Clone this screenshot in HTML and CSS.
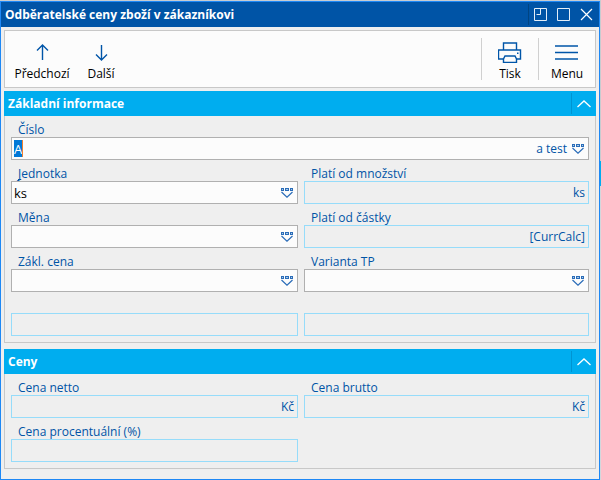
FILE: index.html
```
<!DOCTYPE html>
<html lang="cs">
<head>
    <meta charset="UTF-8">
    <meta name="viewport" content="width=device-width, initial-scale=1.0">
    <title>Odběratelské ceny zboží v zákazníkovi</title>
    <link rel="stylesheet" href="styles.css">
</head>
<body>
    <svg class="sprite" aria-hidden="true">
        <symbol id="pick" viewBox="0 0 12 10">
            <path d="M0 0h3v3H0zM4 0h4v3H4zM9 0h3v3H9z" fill="#2a6cb8"/>
            <path d="M1 1h1v1H1zM5 1h2v1H5zM10 1h1v1H10z" fill="#a9cbea"/>
            <path d="M0.5 4L6 9.2L11.5 4" fill="none" stroke="#2a6cb8" stroke-width="1.2"/>
        </symbol>
        <symbol id="chevron" viewBox="0 0 14 8">
            <path d="M0.5 7L7 1L13.5 7" fill="none" stroke="#fff" stroke-width="1.3"/>
        </symbol>
    </svg>

    <div class="window">
        <header class="titlebar">
            <h1>Odběratelské ceny zboží v zákazníkovi</h1>
            <div class="window-buttons">
                <button type="button" aria-label="Ukotvit">
                    <svg width="13" height="13" viewBox="0 0 13 13"><path d="M0.5 0.5h12v12h-12zM6.5 1v5.5h-4" fill="none" stroke="#e4eef8"/></svg>
                </button>
                <button type="button" aria-label="Maximalizovat">
                    <svg width="13" height="13" viewBox="0 0 13 13"><path d="M0.5 0.5h12v12h-12z" fill="none" stroke="#e4eef8"/></svg>
                </button>
                <button type="button" aria-label="Zavřít">
                    <svg width="13" height="13" viewBox="0 0 13 13"><path d="M1 1l11 11M12 1L1 12" fill="none" stroke="#fff" stroke-width="1.2"/></svg>
                </button>
            </div>
        </header>

        <nav class="toolbar">
            <button type="button" class="tool tool-prev">
                <svg width="24" height="24" viewBox="0 0 24 24"><path d="M12.5 21V6M7 11.5L12.5 6L18 11.5" fill="none" stroke="#0055a8" stroke-width="1.4"/></svg>
                <span>Předchozí</span>
            </button>
            <button type="button" class="tool tool-next">
                <svg width="24" height="24" viewBox="0 0 24 24"><path d="M12.5 6V21M7 15.5L12.5 21L18 15.5" fill="none" stroke="#0055a8" stroke-width="1.4"/></svg>
                <span>Další</span>
            </button>
            <button type="button" class="tool tool-side tool-right">
                <svg width="24" height="24" viewBox="0 0 24 24">
                    <path d="M5.5 11V4h13v7M5.5 20h-5v-9h22v9h-4" fill="none" stroke="#0055a8" stroke-width="1.4"/>
                    <path d="M7 17h10l1.500 3v3.500h-13V20z" fill="none" stroke="#0055a8" stroke-width="1.4"/>
                    <path d="M19 13.500h1.500v1.500H19z" fill="#0055a8"/>
                </svg>
                <span>Tisk</span>
            </button>
            <button type="button" class="tool tool-side">
                <svg width="24" height="24" viewBox="0 0 24 24"><path d="M0 7h23M0 13.5h23M0 20h23" fill="none" stroke="#0055a8" stroke-width="1.4"/></svg>
                <span>Menu</span>
            </button>
        </nav>

        <section class="panel">
            <div class="panel-head">
                <h2>Základní informace</h2>
                <button type="button" class="collapse" aria-label="Sbalit"><svg width="14" height="8"><use href="#chevron"/></svg></button>
            </div>
            <div class="panel-body">
                <div class="field field-wide">
                    <label for="cislo">Číslo</label>
                    <div class="box">
                        <div class="code"><input type="text" id="cislo" class="selected" value="A"></div>
                        <span class="unit">a test</span>
                        <button type="button" class="pick" aria-label="Vybrat číslo"><svg width="12" height="10"><use href="#pick"/></svg></button>
                    </div>
                </div>
                <div class="field">
                    <label for="jednotka"><u>J</u>ednotka</label>
                    <div class="box">
                        <input type="text" id="jednotka" value="ks">
                        <button type="button" class="pick" aria-label="Vybrat jednotku"><svg width="12" height="10"><use href="#pick"/></svg></button>
                    </div>
                </div>
                <div class="field">
                    <label for="mnozstvi">Platí od množství</label>
                    <div class="box readonly">
                        <input type="text" id="mnozstvi" readonly>
                        <span class="unit">ks</span>
                    </div>
                </div>
                <div class="field">
                    <label for="mena">Měna</label>
                    <div class="box">
                        <input type="text" id="mena">
                        <button type="button" class="pick" aria-label="Vybrat měnu"><svg width="12" height="10"><use href="#pick"/></svg></button>
                    </div>
                </div>
                <div class="field">
                    <label for="castka">Platí od částky</label>
                    <div class="box readonly">
                        <input type="text" id="castka" readonly>
                        <span class="unit">[CurrCalc]</span>
                    </div>
                </div>
                <div class="field">
                    <label for="zaklcena">Zákl. cena</label>
                    <div class="box">
                        <input type="text" id="zaklcena">
                        <button type="button" class="pick" aria-label="Vybrat základní cenu"><svg width="12" height="10"><use href="#pick"/></svg></button>
                    </div>
                </div>
                <div class="field">
                    <label for="varianta">Varianta TP</label>
                    <div class="box">
                        <input type="text" id="varianta">
                        <button type="button" class="pick" aria-label="Vybrat variantu"><svg width="12" height="10"><use href="#pick"/></svg></button>
                    </div>
                </div>
                <div class="field">
                    <label for="info1"></label>
                    <div class="box readonly"><input type="text" id="info1" readonly></div>
                </div>
                <div class="field">
                    <label for="info2"></label>
                    <div class="box readonly"><input type="text" id="info2" readonly></div>
                </div>
            </div>
        </section>

        <section class="panel">
            <div class="panel-head">
                <h2>Ceny</h2>
                <button type="button" class="collapse" aria-label="Sbalit"><svg width="14" height="8"><use href="#chevron"/></svg></button>
            </div>
            <div class="panel-body">
                <div class="field">
                    <label for="netto">Cena netto</label>
                    <div class="box readonly">
                        <input type="text" id="netto" readonly>
                        <span class="unit">Kč</span>
                    </div>
                </div>
                <div class="field">
                    <label for="brutto">Cena brutto</label>
                    <div class="box readonly">
                        <input type="text" id="brutto" readonly>
                        <span class="unit">Kč</span>
                    </div>
                </div>
                <div class="field">
                    <label for="procento">Cena procentuální (%)</label>
                    <div class="box readonly"><input type="text" id="procento" readonly></div>
                </div>
            </div>
        </section>
    </div>
</body>
</html>
```
FILE: styles.css
```
* {
    box-sizing: border-box;
}

body {
    margin: 0;
    padding: 1px 1px 0 0;
    min-height: 100vh;
    display: flex;
    background: linear-gradient(#c8ccd0 161px, #00adef 161px, #00adef 186px, #d3d7dc 186px);
    font-family: "Open Sans", "Noto Sans", sans-serif;
    font-size: 12px;
    line-height: 16px;
    color: #000;
}

button {
    border: none;
    padding: 0;
    background: none;
    font: inherit;
    color: inherit;
    cursor: pointer;
}

svg {
    display: block;
}

u {
    text-decoration-skip-ink: none;
}

.sprite {
    position: absolute;
    width: 0;
    height: 0;
}

.window {
    flex: 1;
    border: 1px solid #1e88f5;
    background: #efefef;
}

.titlebar {
    display: flex;
    align-items: center;
    height: 25px;
    padding-left: 4px;
    background: #0054a6;
    color: #fff;
}

h1,
h2 {
    flex: 1;
    margin: 0;
    padding-top: 1px;
    font-size: 12px;
    font-weight: 700;
}

.window-buttons {
    display: flex;
    align-items: center;
    gap: 10px;
    height: 21px;
    padding: 0 6px 0 5px;
    border-left: 1px solid #004482;
}

.toolbar {
    display: flex;
    align-items: center;
    height: 58px;
    margin: 3px 3px;
    padding: 0 0 0 1px;
    background: #fcfcfc;
    border: 1px solid #c8c8c8;
}

.tool {
    display: flex;
    flex-direction: column;
    align-items: center;
    justify-content: flex-end;
    gap: 3px;
    height: 42px;
    padding: 0 8px;
}

.tool svg {
    flex-shrink: 0;
}

.tool span {
    height: 14px;
}

.tool-prev {
    width: 72px;
}

.tool-next {
    width: 46px;
}

.tool-side {
    width: 57px;
    border-left: 1px solid #d0d0d0;
}

.tool-right {
    margin-left: auto;
}

.panel {
    margin: 0 3px 6px;
}

.panel-head {
    display: flex;
    align-items: center;
    height: 25px;
    padding-left: 4px;
    background: #00adef;
    color: #fff;
}

.collapse {
    height: 21px;
    padding: 0 5px;
    border-left: 1px solid #0094d2;
}

.panel-body {
    display: grid;
    grid-template-columns: calc(50% - 2px) 1fr;
    gap: 6px;
    padding: 6px;
    border: 1px solid #c8c8c8;
    border-top: none;
}

.field-wide {
    grid-column: 1 / 3;
}

.field label {
    display: block;
    height: 15px;
    padding-left: 7px;
    color: #0054a6;
}

.box {
    display: flex;
    align-items: center;
    height: 23px;
    padding: 0 4px 0 2px;
    background: #fcfcfc;
    border: 1px solid #b0b0b0;
}

.box input {
    flex: 1;
    width: 100%;
    min-width: 0;
    height: 17px;
    padding: 0;
    border: none;
    outline: none;
    background: none;
    font: inherit;
    font-size: 13px;
}

.code {
    flex: 1;
}

.box .selected {
    display: block;
    width: 9px;
    background: #0078d7;
    border-right: 1px solid #f08030;
    color: #fff;
}

.unit {
    color: #0054a6;
}

.readonly {
    padding-right: 3px;
    background: #efefef;
    border-color: #96dcfa;
}

.pick {
    margin-left: 5px;
}
```
